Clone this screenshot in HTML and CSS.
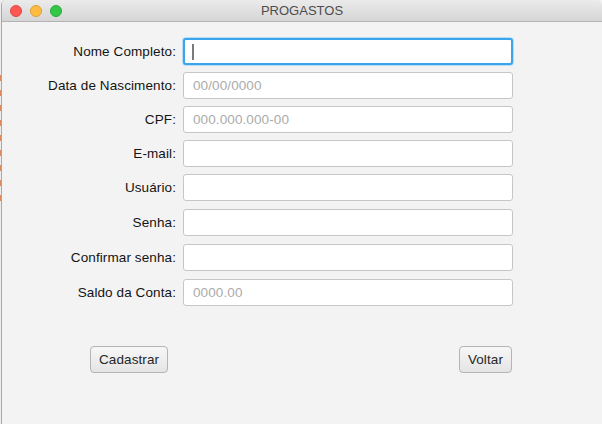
FILE: index.html
```html
<!DOCTYPE html>
<html lang="pt">
<head>
<meta charset="utf-8">
<title>PROGASTOS</title>
<link rel="stylesheet" href="styles.css">
</head>
<body>
<div class="desktop">
  <div class="window">
    <div class="titlebar">
      <div class="lights">
        <span class="light red"></span>
        <span class="light yellow"></span>
        <span class="light green"></span>
      </div>
      <div class="title">PROGASTOS</div>
    </div>
    <div class="content">
      <form class="form">
        <div class="row"><label class="label">Nome Completo:</label><div class="field focused"><span class="caret"></span></div></div>
        <div class="row"><label class="label">Data de Nascimento:</label><div class="field"><span class="ph">00/00/0000</span></div></div>
        <div class="row"><label class="label">CPF:</label><div class="field"><span class="ph">000.000.000-00</span></div></div>
        <div class="row"><label class="label">E-mail:</label><div class="field"></div></div>
        <div class="row"><label class="label">Usuário:</label><div class="field"></div></div>
        <div class="row shift"><label class="label">Senha:</label><div class="field"></div></div>
        <div class="row shift"><label class="label">Confirmar senha:</label><div class="field"></div></div>
        <div class="row shift"><label class="label">Saldo da Conta:</label><div class="field"><span class="ph">0000.00</span></div></div>
      </form>
      <div class="buttons">
        <button class="btn" type="button">Cadastrar</button>
        <button class="btn" type="button">Voltar</button>
      </div>
    </div>
  </div>
</div>
</body>
</html>
```
FILE: styles.css
```css
html, body {
  margin: 0;
  padding: 0;
  width: 602px;
  height: 424px;
  overflow: hidden;
  font-family: "Liberation Sans", Arial, sans-serif;
}
.desktop {
  width: 602px;
  height: 424px;
  display: flex;
  background: #f3f3f3;
}
.desktop::before {
  content: "";
  width: 1px;
  flex: none;
  background: repeating-linear-gradient(to bottom, #d98a5f 0 6px, #ececec 6px 15px);
  background-size: 1px 128px;
  background-repeat: no-repeat;
  background-position: 0 75px;
  background-color: #ececec;
}
.window {
  flex: 1;
  display: flex;
  flex-direction: column;
  background: #f3f3f3;
  border-left: 1px solid #a9a9a9;
  border-top-left-radius: 5px;
  border-top-right-radius: 5px;
  overflow: hidden;
}
.titlebar {
  height: 22px;
  flex: none;
  display: flex;
  align-items: center;
  position: relative;
  background: linear-gradient(#ebebeb, #d5d5d5);
  border-bottom: 1px solid #b3b3b3;
  box-sizing: border-box;
}
.lights {
  display: flex;
  gap: 8px;
  padding-left: 8px;
}
.light {
  width: 12px;
  height: 12px;
  border-radius: 50%;
  box-sizing: border-box;
}
.red { background: #fc5753; border: 1px solid #df4744; }
.yellow { background: #fdbc40; border: 1px solid #de9f34; }
.green { background: #33c748; border: 1px solid #27aa35; }
.title {
  position: absolute;
  left: 0;
  right: 0;
  top: 0;
  bottom: 0;
  display: flex;
  align-items: center;
  justify-content: center;
  font-size: 13px;
  color: #4d4d4d;
}
.content {
  flex: 1;
  display: flex;
  flex-direction: column;
  padding: 16px 0 0 0;
}
.form {
  display: flex;
  flex-direction: column;
  gap: 7px;
  margin: 0;
}
.row {
  display: flex;
  align-items: center;
  height: 27px;
}
.row.shift { margin-top: 1px; }
.label {
  width: 181px;
  flex: none;
  text-align: right;
  font-size: 13.5px;
  letter-spacing: 0.1px;
  color: #141414;
  padding-right: 7px;
  box-sizing: border-box;
}
.field {
  width: 330px;
  height: 27px;
  box-sizing: border-box;
  background: #fff;
  border: 1px solid #c6c6c6;
  border-radius: 3px;
  display: flex;
  align-items: center;
  padding-left: 9px;
}
.field.focused {
  border: 2px solid #3aa5ea;
  box-shadow: 0 0 0 1px #b9dcf4;
  padding-left: 7px;
}
.caret {
  width: 2px;
  height: 16px;
  background: #7a7a7a;
}
.ph {
  font-size: 13.5px;
  letter-spacing: 0.1px;
  color: #ababab;
}
.buttons {
  display: flex;
  justify-content: space-between;
  padding: 40px 90px 0 88px;
}
.btn {
  height: 27px;
  box-sizing: border-box;
  padding: 0 8px;
  font-family: "Liberation Sans", Arial, sans-serif;
  font-size: 13.5px;
  letter-spacing: 0.1px;
  color: #262626;
  background: linear-gradient(#f7f7f7, #e4e4e4);
  border: 1px solid #b4b4b4;
  border-radius: 4px;
}
```
